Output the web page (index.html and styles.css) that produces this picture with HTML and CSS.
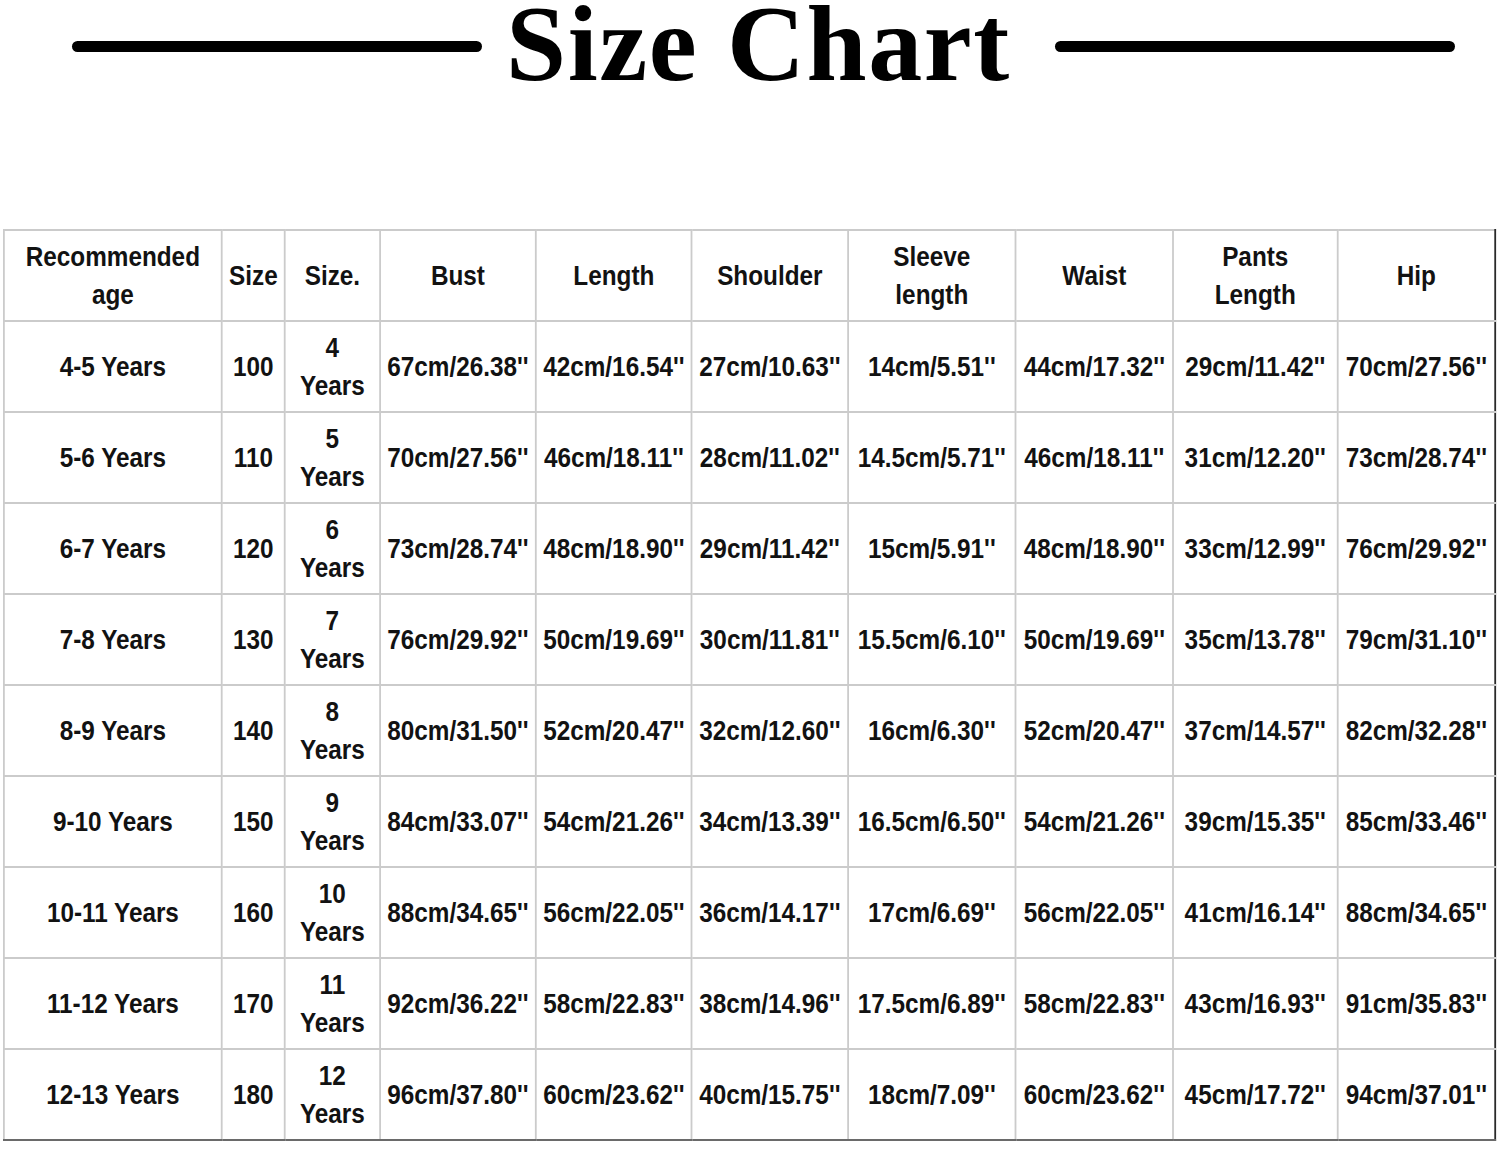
FILE: index.html
```html
<!DOCTYPE html>
<html>
<head>
<meta charset="utf-8">
<link rel="stylesheet" href="styles.css">
</head>
<body>
<header class="title-bar">
  <span class="rule rule-left"></span>
  <h1 class="title">Size Chart</h1>
  <span class="rule rule-right"></span>
</header>
<div class="chart-wrap">
<table class="chart">
  <colgroup>
    <col class="c-age"><col class="c-size"><col class="c-size2"><col class="c-bust"><col class="c-len"><col class="c-sh"><col class="c-sl"><col class="c-waist"><col class="c-pants"><col class="c-hip">
  </colgroup>
  <thead>
    <tr><th>Recommended<br>age</th><th>Size</th><th>Size.</th><th>Bust</th><th>Length</th><th>Shoulder</th><th>Sleeve<br>length</th><th>Waist</th><th>Pants<br>Length</th><th>Hip</th></tr>
  </thead>
  <tbody>
    <tr><td>4-5 Years</td><td>100</td><td>4<br>Years</td><td>67cm/26.38''</td><td>42cm/16.54''</td><td>27cm/10.63''</td><td>14cm/5.51''</td><td>44cm/17.32''</td><td>29cm/11.42''</td><td>70cm/27.56''</td></tr>
    <tr><td>5-6 Years</td><td>110</td><td>5<br>Years</td><td>70cm/27.56''</td><td>46cm/18.11''</td><td>28cm/11.02''</td><td>14.5cm/5.71''</td><td>46cm/18.11''</td><td>31cm/12.20''</td><td>73cm/28.74''</td></tr>
    <tr><td>6-7 Years</td><td>120</td><td>6<br>Years</td><td>73cm/28.74''</td><td>48cm/18.90''</td><td>29cm/11.42''</td><td>15cm/5.91''</td><td>48cm/18.90''</td><td>33cm/12.99''</td><td>76cm/29.92''</td></tr>
    <tr><td>7-8 Years</td><td>130</td><td>7<br>Years</td><td>76cm/29.92''</td><td>50cm/19.69''</td><td>30cm/11.81''</td><td>15.5cm/6.10''</td><td>50cm/19.69''</td><td>35cm/13.78''</td><td>79cm/31.10''</td></tr>
    <tr><td>8-9 Years</td><td>140</td><td>8<br>Years</td><td>80cm/31.50''</td><td>52cm/20.47''</td><td>32cm/12.60''</td><td>16cm/6.30''</td><td>52cm/20.47''</td><td>37cm/14.57''</td><td>82cm/32.28''</td></tr>
    <tr><td>9-10 Years</td><td>150</td><td>9<br>Years</td><td>84cm/33.07''</td><td>54cm/21.26''</td><td>34cm/13.39''</td><td>16.5cm/6.50''</td><td>54cm/21.26''</td><td>39cm/15.35''</td><td>85cm/33.46''</td></tr>
    <tr><td>10-11 Years</td><td>160</td><td>10<br>Years</td><td>88cm/34.65''</td><td>56cm/22.05''</td><td>36cm/14.17''</td><td>17cm/6.69''</td><td>56cm/22.05''</td><td>41cm/16.14''</td><td>88cm/34.65''</td></tr>
    <tr><td>11-12 Years</td><td>170</td><td>11<br>Years</td><td>92cm/36.22''</td><td>58cm/22.83''</td><td>38cm/14.96''</td><td>17.5cm/6.89''</td><td>58cm/22.83''</td><td>43cm/16.93''</td><td>91cm/35.83''</td></tr>
    <tr><td>12-13 Years</td><td>180</td><td>12<br>Years</td><td>96cm/37.80''</td><td>60cm/23.62''</td><td>40cm/15.75''</td><td>18cm/7.09''</td><td>60cm/23.62''</td><td>45cm/17.72''</td><td>94cm/37.01''</td></tr>
  </tbody>
</table>
</div>
</body>
</html>
```
FILE: styles.css
```css
html, body {
  margin: 0;
  padding: 0;
  background: #ffffff;
}
body {
  width: 1500px;
  height: 1149px;
  overflow: hidden;
}
.title-bar {
  display: flex;
  align-items: center;
  height: 92px;
  padding-left: 72px;
}
.rule {
  display: block;
  flex: none;
  height: 11px;
  background: #000;
  border-radius: 6px;
}
.rule-left {
  width: 410px;
  margin-right: 24px;
}
.rule-right {
  width: 400px;
  margin-left: 44px;
}
.title {
  margin: 0;
  flex: none;
  align-self: flex-start;
  font-family: "Liberation Serif", serif;
  font-weight: bold;
  font-size: 108px;
  line-height: 88px;
  color: #000;
  letter-spacing: 1.6px;
}
/* The reference type is a condensed grotesque: Liberation Sans Bold
   squeezed to 90% horizontally. The table is laid out at 1/0.9 width
   inside a wrapper that clips the unscaled layout box. */
.chart-wrap {
  margin-top: 137px;
  width: 1498px;
  overflow: hidden;
}
.chart {
  margin-left: 3px;
  width: 1656.7px;
  transform: scaleX(0.9);
  transform-origin: 0 0;
  table-layout: fixed;
  border-collapse: collapse;
  font-family: "Liberation Sans", Arial, sans-serif;
  font-weight: bold;
  font-size: 27px;
  line-height: 38px;
  color: #121212;
}
.c-age { width: 242.2px; }
.c-size { width: 70px; }
.c-size2 { width: 105.6px; }
.c-bust { width: 173.3px; }
.c-len { width: 173.3px; }
.c-sh { width: 173.3px; }
.c-sl { width: 186.7px; }
.c-waist { width: 174.4px; }
.c-pants { width: 183.3px; }
.c-hip { width: 174.6px; }
.chart th, .chart td {
  border: 2px solid #cbcbcb;
  height: 89px;
  padding: 0;
  text-align: center;
  vertical-align: middle;
  white-space: nowrap;
  font-weight: bold;
}
.chart tr > :last-child {
  border-right: 2px solid #2a2a2a;
}
.chart tbody tr:last-child td {
  border-bottom: 2px solid #6a6a6a;
}
```
